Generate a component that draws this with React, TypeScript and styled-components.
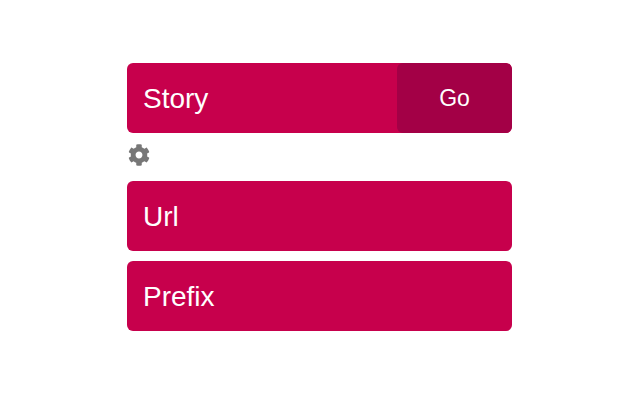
import styled, { createGlobalStyle } from 'styled-components'
import { FaCog } from 'react-icons/fa'

const GlobalStyle = createGlobalStyle`
  html, body {
    margin: 0;
    padding: 0;
    background: #fff;
  }
  body {
    font-family: 'Liberation Sans', Arial, sans-serif;
  }
`

const Page = styled.main`
  width: 640px;
  height: 400px;
  box-sizing: border-box;
  padding: 63px 128px 0 127px;
`

const Panel = styled.section`
  display: flex;
  align-items: stretch;
  height: 70px;
  margin-bottom: 10px;
  border-radius: 6px;
  background: #c7004c;
  color: #fff;
  overflow: hidden;
`

const Label = styled.div`
  flex: 1;
  display: flex;
  align-items: center;
  padding: 2px 0 0 16px;
  font-size: 28px;
`

const GoButton = styled.button`
  width: 115px;
  padding: 0;
  border: 0;
  border-radius: 6px;
  background: #a30046;
  color: #fff;
  font-family: inherit;
  font-size: 23px;
`

const Settings = styled.div`
  display: flex;
  align-items: center;
  height: 44px;
  margin: -10px 0 4px;
  padding-left: 1px;
  color: #777;
  font-size: 22px;
`

export default function App() {
  return (
    <>
      <GlobalStyle />
      <Page>
        <Panel>
          <Label>Story</Label>
          <GoButton>Go</GoButton>
        </Panel>
        <Settings>
          <FaCog />
        </Settings>
        <Panel>
          <Label>Url</Label>
        </Panel>
        <Panel>
          <Label>Prefix</Label>
        </Panel>
      </Page>
    </>
  )
}
